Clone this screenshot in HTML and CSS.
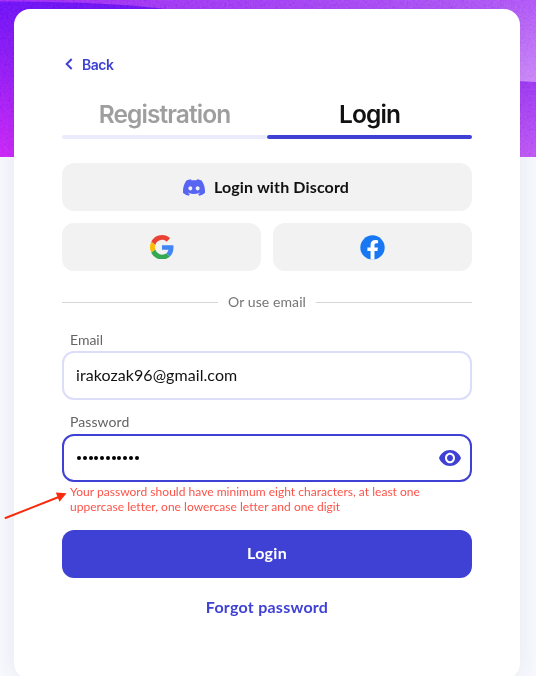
FILE: index.html
```html
<!DOCTYPE html>
<html lang="en">
<head>
<meta charset="utf-8">
<title>Login</title>
<link rel="stylesheet" href="styles.css">
</head>
<body>
<svg class="hero" viewBox="0 0 536 157" preserveAspectRatio="none" aria-hidden="true">
  <defs>
    <linearGradient id="left" x1="0" y1="0" x2="0" y2="1"><stop offset="0" stop-color="#6d12f8"/><stop offset=".35" stop-color="#8b1af6"/><stop offset="1" stop-color="#cb25f7"/></linearGradient>
    <linearGradient id="top" x1="0" y1="0" x2="1" y2="0"><stop offset="0" stop-color="#a12cf6"/><stop offset=".5" stop-color="#a53ff7"/><stop offset="1" stop-color="#b25af8"/></linearGradient>
    <linearGradient id="right" x1="0" y1="0" x2="0" y2="1"><stop offset="0" stop-color="#b054f7"/><stop offset="1" stop-color="#cb86f9"/></linearGradient>
    <linearGradient id="low" x1="0" y1="0" x2="0" y2="1"><stop offset="0" stop-color="#9c36f3"/><stop offset="1" stop-color="#bf55f6"/></linearGradient>
    <filter id="grain" x="0" y="0" width="1" height="1"><feTurbulence type="fractalNoise" baseFrequency=".45" numOctaves="2" seed="4"/><feColorMatrix type="matrix" values="1.6 0 0 0 -.3  1.6 0 0 0 -.3  1.6 0 0 0 -.3  0 0 0 0 1"/></filter>
  </defs>
  <rect width="536" height="157" fill="url(#left)"/>
  <path d="M0 0H536V12H190Q115 1 0 1.5Z" fill="url(#top)"/>
  <rect x="500" width="36" height="82" fill="url(#right)"/>
  <path d="M500 80L536 82V157H500Z" fill="url(#low)"/>
  <rect class="grain" width="536" height="157" filter="url(#grain)" opacity=".22"/>
</svg>

<main class="card">
  <a class="back"><svg width="8" height="12" viewBox="0 0 8 12"><path d="M6.7 1L1.7 6l5 5" fill="none" stroke="#3f41d4" stroke-width="2"/></svg><span>Back</span></a>

  <nav class="tabs">
    <a class="tab"><span>Registration</span></a>
    <a class="tab active"><span>Login</span></a>
  </nav>

  <div class="social">
    <button class="soft discord">
      <svg width="22" height="17" viewBox="0 0 127.14 96.36"><path fill="#5865f2" d="M107.7 8.07A105.15 105.15 0 0 0 81.47 0a72.06 72.06 0 0 0-3.36 6.83 97.68 97.68 0 0 0-29.11 0A72.37 72.37 0 0 0 45.64 0a105.89 105.89 0 0 0-26.25 8.09C2.79 32.65-1.71 56.6.54 80.21a105.73 105.73 0 0 0 32.17 16.15 77.7 77.7 0 0 0 6.89-11.11 68.42 68.42 0 0 1-10.85-5.18c.91-.66 1.8-1.34 2.66-2a75.57 75.57 0 0 0 64.32 0c.87.71 1.76 1.39 2.66 2a68.68 68.68 0 0 1-10.87 5.19 77 77 0 0 0 6.89 11.1 105.25 105.25 0 0 0 32.19-16.14c2.64-27.38-4.51-51.11-18.9-72.15ZM42.45 65.69C36.18 65.69 31 60 31 53s5-12.74 11.43-12.74S54 46 53.89 53s-5.05 12.69-11.44 12.69Zm42.24 0C78.41 65.69 73.25 60 73.25 53s5-12.74 11.44-12.74S96.23 46 96.12 53s-5.04 12.69-11.43 12.69Z"/></svg>
      <span>Login with Discord</span>
    </button>
    <button class="soft" aria-label="Google">
      <svg width="24" height="24.5" viewBox="0 0 48 48" preserveAspectRatio="none"><path fill="#ea4335" d="M24 9.5c3.54 0 6.71 1.22 9.21 3.6l6.85-6.85C35.9 2.38 30.47 0 24 0 14.62 0 6.51 5.38 2.56 13.22l7.98 6.19C12.43 13.72 17.74 9.5 24 9.5z"/><path fill="#4285f4" d="M46.98 24.55c0-1.57-.15-3.09-.38-4.55H24v9.02h12.94c-.58 2.96-2.26 5.48-4.78 7.18l7.73 6c4.51-4.18 7.09-10.36 7.09-17.65z"/><path fill="#fbbc05" d="M10.53 28.59c-.48-1.45-.76-2.99-.76-4.59s.27-3.14.76-4.59l-7.98-6.19C.92 16.46 0 20.12 0 24c0 3.88.92 7.54 2.56 10.78l7.97-6.19z"/><path fill="#34a853" d="M24 48c6.48 0 11.93-2.13 15.89-5.81l-7.73-6c-2.15 1.45-4.92 2.3-8.16 2.3-6.26 0-11.57-4.22-13.47-9.91l-7.98 6.19C6.51 42.62 14.62 48 24 48z"/></svg>
    </button>
    <button class="soft" aria-label="Facebook">
      <svg width="25" height="25" viewBox="0 0 24 24"><circle cx="12" cy="12" r="11.7" fill="#1877f2"/><path fill="#fff" d="M10.15 23.6v-8.15H7.1V12h3.05V9.36c0-3 1.79-4.67 4.53-4.67 1.31 0 2.68.24 2.68.24v2.95h-1.51c-1.49 0-1.95.92-1.95 1.87V12h3.33l-.53 3.45h-2.8v8.15a12 12 0 0 1-3.75 0z"/></svg>
    </button>
  </div>

  <div class="divider"><span>Or use email</span></div>

  <div class="label"><span>Email</span></div>
  <div class="field"><span class="email">irakozak96@gmail.com</span></div>

  <div class="label second"><span>Password</span></div>
  <div class="field focus">
    <span class="dots"><i></i><i></i><i></i><i></i><i></i><i></i><i></i><i></i><i></i><i></i><i></i></span>
    <svg width="22" height="16" viewBox="1 4.5 22 15" preserveAspectRatio="none"><path fill="#3f41d4" d="M12 4.5C7 4.5 2.73 7.61 1 12c1.73 4.39 6 7.5 11 7.5s9.27-3.11 11-7.5c-1.73-4.39-6-7.5-11-7.5zM12 17c-2.76 0-5-2.24-5-5s2.24-5 5-5 5 2.24 5 5-2.24 5-5 5zm0-8c-1.66 0-3 1.34-3 3s1.34 3 3 3 3-1.34 3-3-1.34-3-3-3z"/></svg>
  </div>
  <p class="error"><span>Your password should have minimum eight characters, at least one</span><br><span>uppercase letter, one lowercase letter and one digit</span></p>

  <button class="submit"><span>Login</span></button>
  <a class="forgot"><span>Forgot password</span></a>
</main>

<svg class="pointer" width="64" height="30" viewBox="0 0 64 30" aria-hidden="true"><path d="M1.5 27L56 5.5" stroke="#fa2a0c" stroke-width="1.9" stroke-linecap="round"/><path d="M62.5 2.3L51.8 1.5L55.5 10.8Z" fill="#fa2a0c"/></svg>
</body>
</html>
```
FILE: styles.css
```css
* { box-sizing: border-box; }

body {
  margin: 0;
  height: 676px;
  position: relative;
  overflow: hidden;
  background: #f8f9fe;
  font-family: Lato, "Open Sans", sans-serif;
  color: #111;
  display: flow-root;
}

.hero { position: absolute; left: 0; top: 0; width: 536px; height: 157px; }
.grain { mix-blend-mode: soft-light; }

.card {
  position: relative;
  width: 506px;
  height: 670px;
  margin: 9px 0 0 14px;
  padding: 46px 48px 0;
  border-radius: 16px;
  background: #fff;
  box-shadow: 0 0 24px rgba(60, 60, 110, .09);
}

.card span { white-space: nowrap; }

.back {
  display: flex;
  align-items: center;
  gap: 9px;
  height: 20px;
  padding-left: 3px;
  color: #3f41d4;
  font: 600 14px/20px Inter, sans-serif;
}
.back svg { margin-bottom: 2px; }
.back span { letter-spacing: -.5px; }

.tabs { display: grid; grid-template-columns: 1fr 1fr; margin-top: 20px; }

.tab {
  display: flex;
  flex-direction: column;
  justify-content: space-between;
  height: 44px;
  padding-top: 4px;
  text-align: center;
  color: #9e9e9e;
  font: 600 24.5px/31px Inter, sans-serif;
  letter-spacing: -.9px;
}
.tab::after { content: ""; height: 4px; border-radius: 2px; background: #eaebfc; }
.tab.active { color: #111; }
.tab.active::after { background: #3f41d4; }

.social { display: grid; grid-template-columns: 1fr 1fr; gap: 12px; margin-top: 24px; }

button { border: 0; padding: 0; border-radius: 12px; height: 48px; font: 700 16px/20px Lato, sans-serif; }

.soft { display: flex; align-items: center; justify-content: center; gap: 9px; background: #f2f2f2; color: #111; }
.discord { grid-column: span 2; padding-right: 2px; letter-spacing: .14px; }

.divider { display: flex; align-items: center; gap: 10px; height: 20px; margin-top: 21px; color: #757575; font-size: 14px; letter-spacing: .1px; }
.divider span { padding-bottom: 2px; }
.divider::before, .divider::after { content: ""; flex: 1; height: 1px; background: #d5d5d5; }

.label { height: 20px; margin: 18px 0 0 8px; color: #646464; font-size: 14px; line-height: 20px; }
.label.second { margin-top: 12px; letter-spacing: .07px; }

.field {
  display: flex;
  align-items: center;
  justify-content: space-between;
  height: 49px;
  margin-top: 1px;
  padding: 0 9px 0 12px;
  border: 2px solid #dcdcfb;
  border-radius: 12px;
  background: #fff;
}
.field.focus { height: 48px; margin-top: 2px; border-color: #3f41d4; padding-left: 13px; }
.email { padding-bottom: 2px; font-size: 16px; letter-spacing: .07px; }

.dots { display: flex; gap: 1.75px; }
.dots i { width: 4px; height: 4px; border-radius: 50%; background: #000; }

.error { margin: 3px 0 0 8px; color: #fc5349; font-size: 12px; line-height: 14.5px; letter-spacing: .025px; }

.submit { display: block; width: 100%; margin-top: 16px; padding-bottom: 2px; background: #3f41d4; color: #fff; letter-spacing: .3px; }

.forgot { display: block; margin-top: 19px; text-align: center; color: #3f41d4; font-weight: 700; font-size: 16px; line-height: 20px; letter-spacing: .25px; }

.pointer { position: absolute; left: 4px; top: 491px; }
```
